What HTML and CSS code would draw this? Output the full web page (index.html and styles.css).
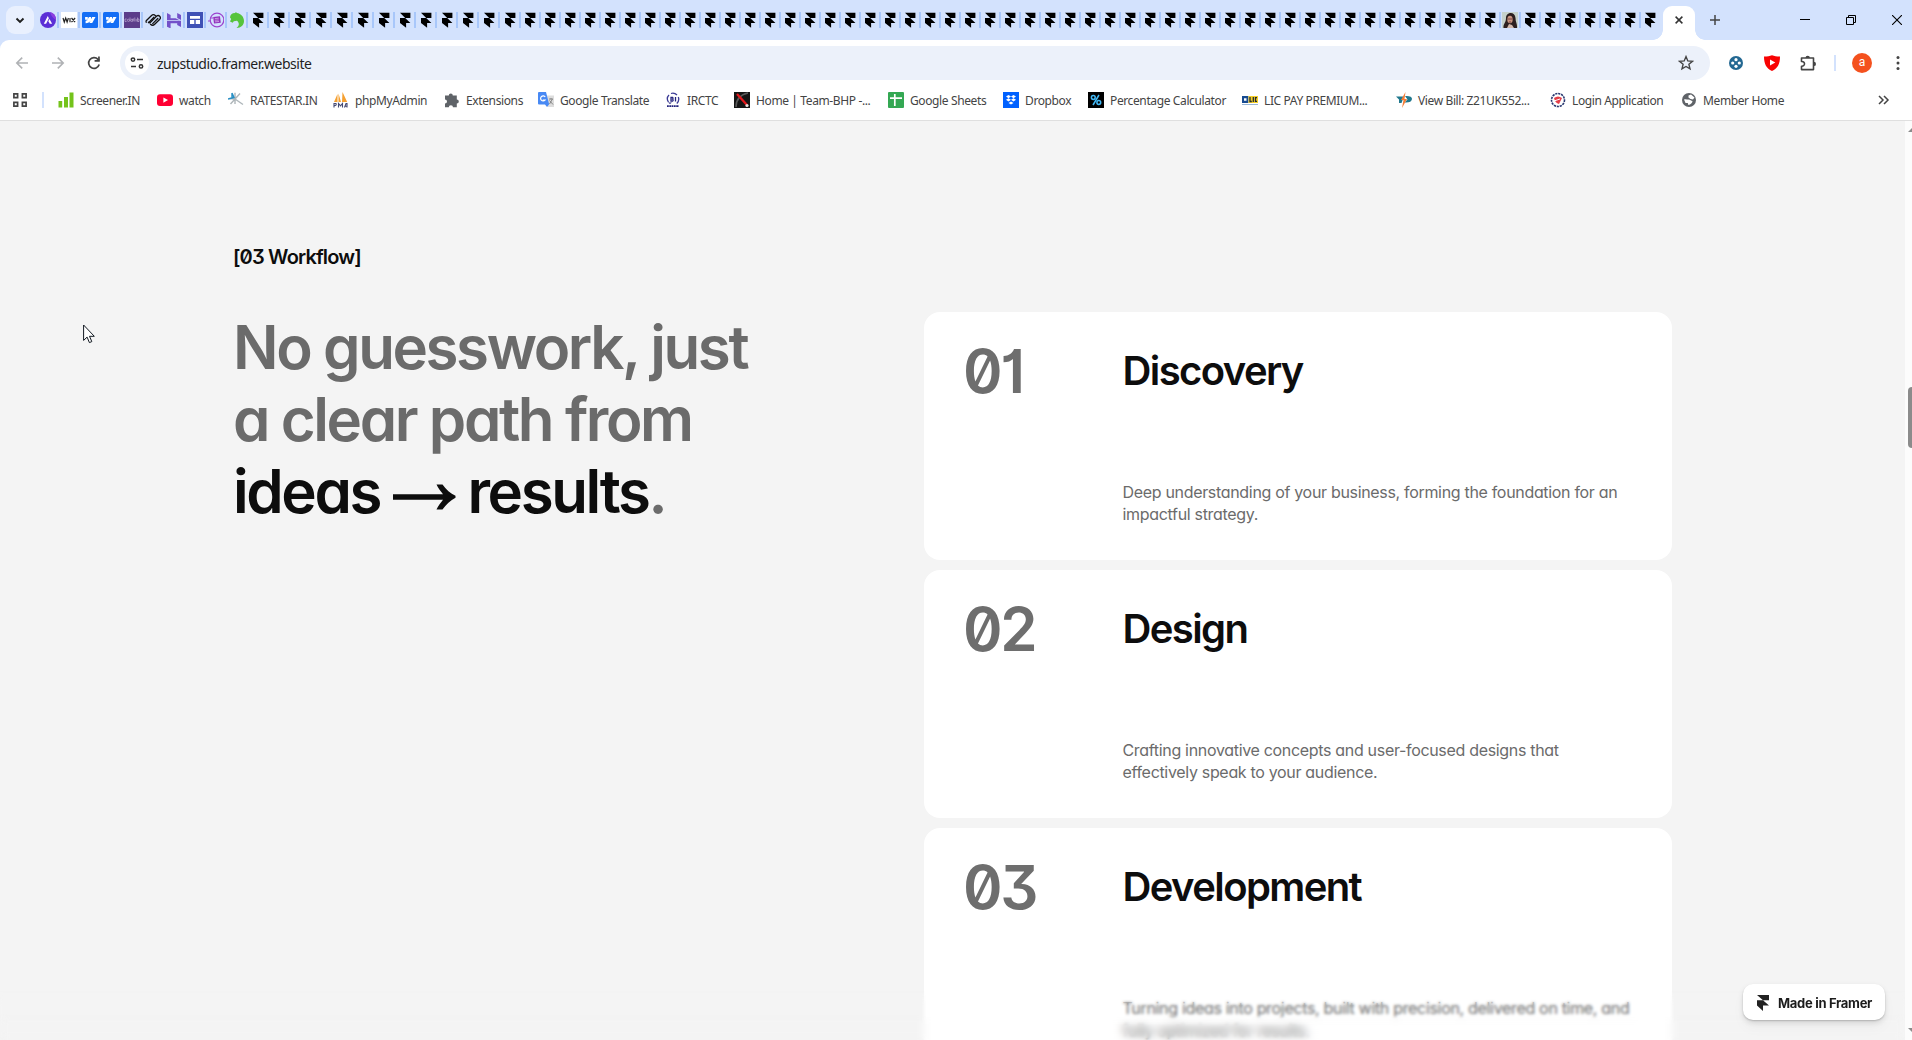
FILE: index.html
```html
<!DOCTYPE html>
<html lang="en">
<head>
<meta charset="utf-8">
<title>zupstudio.framer.website</title>
<link rel="stylesheet" href="styles.css">
</head>
<body>
<svg class="defs" aria-hidden="true">
  <symbol id="framer" viewBox="0 0 16 16"><path d="M3 .8h10.400v5.100H8.200zM3 5.900h5.200l5.200 5H9.100v4.900L3 10.900z"/></symbol>
  <symbol id="astra" viewBox="0 0 16 16"><circle cx="8" cy="8" r="8" fill="#5b2fd6"/><path d="M10 0a8 8 0 0 1 6 8c-3-2-5-4-6-8z" fill="#8b3fe0"/><path d="M3.800 11.800 7.800 4l1.100 2.200-2.800 5.600zM8.300 9.300l1.200-2.400 2.600 4.900H9.700L9.300 10.800z" fill="#fff"/></symbol>
  <symbol id="wix" viewBox="0 0 16 16"><path fill="#fff" d="M0 0h16v16H0z"/><path d="M2 6l1.300 4 1.400-4 1.400 4 1.300-4M9 6v4.200M10.500 6l3.600 4.200M14.100 6l-3.600 4.200" fill="none" stroke="#222" stroke-width="1.200"/></symbol>
  <symbol id="webflow" viewBox="0 0 16 16"><rect width="16" height="16" rx="1.500" fill="#146ef5"/><path d="M13.500 5 10.200 11H7.400l1.200-2.300C7.600 10 6 11 3.600 11.200V8.800s1.500-.1 2.300-1H3.100V5h2.700v2.200L6.900 5H9v2.200L10.200 5z" fill="#fff"/></symbol>
  <symbol id="colorlib" viewBox="0 0 16 16"><path fill="#5b3d8a" d="M0 0h16v16H0z"/><g fill="none" stroke="#bdacd4" stroke-width=".7"><path d="M2.600 7H1v2.500h1.600M9 7v2.500M10 7H8.500M13.500 5.500v4h1.500V7h-1.500"/><circle cx="4.400" cy="8.300" r="1.100"/><circle cx="7.800" cy="8.300" r="1.100"/><path d="M6 5.500v4M10.800 5.500v4M12.200 7v2.500"/></g></symbol>
  <symbol id="squarespace" viewBox="0 0 16 16"><g fill="none" stroke="#111" stroke-width="1.300" stroke-linecap="round"><path d="M1.200 8.800 6.300 3.700a3 3 0 0 1 4.200 0M3.600 10.600l5.300-5.300M1.200 8.800a2 2 0 0 0 0 1.500"/><path d="M5.500 12.300a3 3 0 0 0 4.200 0l5.100-5.100a2.200 2.200 0 0 0-3.100-3.100L5.500 10.300a1.500 1.500 0 0 1-2.100 0M12.800 6.500l-5.100 5.100"/></g></symbol>
  <symbol id="hostinger" viewBox="0 0 16 16"><path d="M1 7.300V1l3.600 2v3.200h5l4 2.100H1zM11.200 6V1L15 3v5zM1 14.800V9l9.700.1L15 11.200H4.600v5.200zM15 8.800v6.200l-3.800-2V9z" fill="#7351c9"/></symbol>
  <symbol id="tdesk" viewBox="0 0 16 16"><path fill="#3f51b5" d="M0 0h16v16H0z"/><path d="M3 4h10v2.700H3zM3 8h4.300v4H3zM8.700 8H13v4H8.700z" fill="#fff"/></symbol>
  <symbol id="ring" viewBox="0 0 16 16"><g fill="none" stroke="#9c45cf" stroke-width="1.200"><circle cx="9" cy="8" r="6.800"/><path d="M0 9h3M2 6h3" stroke-width="1"/></g><path d="M5.200 5 12 4.300l.8 6.500-6.800.8z" fill="#9133bd"/><path d="M6.800 6.600l4-.4M6.800 8.200l4-.2M7 9.800l4-.3" stroke="#eadcf8" stroke-width=".6"/></symbol>
  <symbol id="horse" viewBox="0 0 16 16"><path d="M1 5.500C1 3 3 1 6 1l1-1 .8 1C12 1.500 15 5 15 9c0 4-3 7-7.500 7 3-2.500 3-5 .5-7.300L4.800 9.300 3.700 10.700 1 9.400 2.200 7z" fill="#56c43c"/></symbol>
  <symbol id="photo" viewBox="0 0 16 16"><path fill="#c6d2cb" d="M0 0h16v16H0z"/><path d="M1.500 16C1 12 4 11 4 6c0-6 9-7 9.500 0 0 4 2 6 1.500 10z" fill="#2d2020"/><ellipse cx="8" cy="7.500" rx="2.700" ry="3.800" fill="#c99580"/><path d="M5.500 7h5M7 10h2" stroke="#632d30" stroke-width=".8"/><path d="M5 16l2-4 3 1 2 3z" fill="#d3b9ac"/></symbol>
</svg>

<div class="tabstrip">
  <button class="tab-search" aria-label="Search tabs"><svg width="28" height="28" viewBox="0 0 28 28"><path d="m10.500 12.500 3.500 3.500 3.500-3.500" fill="none" stroke="#1f1f1f" stroke-width="1.900"/></svg></button>
  <div class="tabs" id="tabs"></div>
  <div class="tab-active"><svg width="8" height="8" viewBox="0 0 8 8"><path d="m.6.6 6.800 6.800M7.400.6.600 7.400" stroke="#333" stroke-width="1.500"/></svg></div>
  <svg class="tab-new" width="10" height="10" viewBox="0 0 10 10"><path d="M5 0v10M0 5h10" stroke="#444" stroke-width="1.500"/></svg>
  <div class="window-controls">
    <svg width="10" height="10"><path d="M0 4.500h10" stroke="#000"/></svg>
    <svg width="10" height="10" fill="none" stroke="#000"><path d="M.5 2.500h7v7h-7zM2.500 2.500v-2h7v7h-2"/></svg>
    <svg width="10" height="10"><path d="m0 0 10 10M10 0 0 10" stroke="#000" stroke-width="1.100"/></svg>
  </div>
</div>

<div class="toolbar">
  <div class="nav">
    <svg width="16" height="16" viewBox="0 0 16 16" fill="none" stroke="#b0b2b5" stroke-width="1.600"><path d="M14 8H3M8.200 2.600 2.800 8l5.400 5.400"/></svg>
    <svg width="16" height="16" viewBox="0 0 16 16" fill="none" stroke="#b0b2b5" stroke-width="1.600"><path d="M2 8h11M7.800 2.600 13.200 8l-5.400 5.400"/></svg>
    <svg width="16" height="16" viewBox="0 0 16 16"><path d="M13.200 9.600A5.400 5.400 0 1 1 12 4.300l1.200 1.300" fill="none" stroke="#444" stroke-width="1.700"/><path d="M12.100 1.500h1.700v5.200H8.600V5h3.500z" fill="#444"/></svg>
  </div>
  <div class="omnibox">
    <span class="site-info"><svg width="14" height="14" viewBox="0 0 14 14" fill="none" stroke="#333" stroke-width="1.500"><circle cx="3" cy="3.600" r="1.700"/><path d="M7 3.600h6M1 10.400h5"/><circle cx="11" cy="10.400" r="1.700"/></svg></span>
    <span class="url">zupstudio.framer.website</span>
    <svg class="star" width="16" height="16" viewBox="0 0 16 16"><path d="m8 1.600 1.800 4.300 4.700.4-3.600 3 1.100 4.600L8 11.500l-4 2.400 1.100-4.600-3.600-3 4.700-.4z" fill="none" stroke="#444" stroke-width="1.400"/></svg>
  </div>
  <div class="actions">
    <svg width="14" height="14" viewBox="0 0 14 14"><circle cx="7" cy="7" r="7" fill="#236892"/><g fill="#fff"><circle cx="7" cy="3.700" r="1.600"/><circle cx="7" cy="10.300" r="1.600"/><circle cx="3.700" cy="7" r="1.600"/><circle cx="10.300" cy="7" r="1.600"/></g></svg>
    <svg width="16" height="16" viewBox="0 0 16 16"><path d="M0 1.500C3 1.600 5.500 1 8 .2c2.500.8 5 1.400 8 1.300C16 9 13.500 13.500 8 16 2.500 13.500 0 9 0 1.500z" fill="#f80303"/><path d="M6 4.500 11.300 7.500 6 10.500z" fill="#fff"/></svg>
    <svg width="17" height="17" viewBox="0 0 17 17"><path d="M1.500 3h12v11.600h-12v-3.400C5.500 11.500 5.500 6 1.500 6.500z" fill="none" stroke="#444" stroke-width="1.600" stroke-linejoin="round"/><path d="M5.500 3a2.200 2.200 0 0 1 4.400 0zM13.800 6.700a2.200 2.200 0 0 1 0 4.400z" fill="#444"/></svg>
    <i class="divider"></i>
    <span class="avatar">a</span>
    <svg width="4" height="16" viewBox="0 0 4 16" fill="#444"><circle cx="2" cy="2.500" r="1.500"/><circle cx="2" cy="8" r="1.500"/><circle cx="2" cy="13.500" r="1.500"/></svg>
  </div>
</div>

<div class="bookmarks">
  <svg class="apps" width="14" height="14" viewBox="0 0 14 14" fill="none" stroke="#444" stroke-width="1.700"><path d="M.9.900h3.700v3.700H.9zM9.400.900h3.700v3.700H9.400zM.9 9.400h3.700v3.700H.9zM9.400 9.400h3.700v3.700H9.400z"/></svg>
  <i class="divider"></i>
  <div class="links">
    <a><svg viewBox="0 0 16 16"><path d="M.5 9h3.700v6.500H.5zM6 5h4v10.500H6zM11.500.500h4v15h-4z" fill="#74c31b"/></svg><span>Screener.IN</span></a>
    <a><svg viewBox="0 0 16 16"><rect y="2.200" width="16" height="11.800" rx="3" fill="#f03"/><path d="m6.400 5.500 4.600 2.600-4.600 2.600z" fill="#fff"/></svg><span>watch</span></a>
    <a><svg viewBox="0 0 16 16"><path d="M7 .8V12M2.500 12 12 1.500M7 7l8 5.500M1.500 6.500l5 .5" fill="none" stroke="#aeb6ba" stroke-width="1.400"/><path d="M4 1l2 4.500L0 7M4 1v5" stroke="#258ec4" fill="none" stroke-width="1.400"/></svg><span>RATESTAR.IN</span></a>
    <a><svg viewBox="0 0 16 16"><path d="M4.500 2v8H1zM5.500 1.500 8 10H5.500zM9.500 0l4.700 10H9z" fill="#f5a030"/><path d="M1 15.500v-4h2q1 2-2 2.200M5.500 15.500v-4l2 2.400 2-2.400v4M11.500 15.500l1.500-4h1v4M12 14.200h2" fill="none" stroke="#454a73" stroke-width="1.100"/></svg><span>phpMyAdmin</span></a>
    <a><svg viewBox="0 0 16 16"><path d="M1 3.500h3.800a2 2 0 1 1 4 0h4v4a2 2 0 1 1 0 4v3.800H9a2.100 2.100 0 0 0-4.200 0H1v-3.900a2 2 0 0 0 0-4z" fill="#5f6368"/></svg><span>Extensions</span></a>
    <a><svg viewBox="0 0 16 16"><path d="M7 3.500h9V15H9.500z" fill="#ddd"/><path d="M1 0h7l3.200 12.500H1a1 1 0 0 1-1-1V1a1 1 0 0 1 1-1zM7 12.500h4L9 15z" fill="#4889f4"/><path d="M8 5a2.500 2.500 0 1 0-.2 3H5.500" transform="translate(-.8 0)" fill="none" stroke="#fff" stroke-width="1.200"/><path d="M11 7h4M13 6v1.500M14.500 7l-3 5M11.500 8.500l3.500 4" stroke="#888" fill="none"/></svg><span>Google Translate</span></a>
    <a><svg viewBox="0 0 16 16"><path d="M3.500 10A5.500 5.500 0 0 1 4 3M6 1.500a6 6 0 0 1 6 1.500M13.300 5a6 6 0 0 1-1.500 6.500" fill="none" stroke="#3b3b96" stroke-width="1.300"/><path d="M6 5.300h1.500q1 1 0 1.800 1.300 1.200 0 2H6zM10.500 5v4.500" fill="none" stroke="#24247e" stroke-width="1.300"/><path d="M2 14.200h12" stroke="#24247e" stroke-width="1.800" stroke-dasharray="1.800 .5"/><path d="M3 10.500h4L5 12z" fill="#24247e"/></svg><span>IRCTC</span></a>
    <a><svg viewBox="0 0 16 16"><path d="M0 0h16v16H0z" fill="#151515"/><path d="M2 15C2 8 5 3 14 1" fill="none" stroke="#5a5a5a" stroke-width="1.500"/><path d="m3 2 10 11" stroke="#e5191d" stroke-width="2.300"/><circle cx="13" cy="13.500" r="1.600" fill="#e8e0dd"/></svg><span>Home | Team-BHP -...</span></a>
    <a><svg viewBox="0 0 16 16"><rect width="16" height="16" rx="1" fill="#34a853"/><path d="M6.800 2v12M2 6.200h12" stroke="#fff" stroke-width="1.700"/></svg><span>Google Sheets</span></a>
    <a><svg viewBox="0 0 16 16"><path fill="#0061ff" d="M0 0h16v16H0z"/><path d="m5.500 3 2.500 1.600-2.500 1.600L3 4.600zM10.500 3 13 4.600l-2.500 1.600L8 4.600zM5.500 6.200 8 7.800 5.500 9.400 3 7.800zM10.500 6.200 13 7.800l-2.500 1.600L8 7.800zM8 9.400l2.500 1.600L8 12.600 5.500 11z" fill="#fff"/></svg><span>Dropbox</span></a>
    <a><svg viewBox="0 0 16 16"><path d="M0 0h16v16H0z"/><g fill="none" stroke="#42b8f5" stroke-width="1.500"><circle cx="5.300" cy="5.500" r="1.900"/><circle cx="10.800" cy="10.500" r="1.900"/><path d="M11 3 5 13"/></g></svg><span>Percentage Calculator</span></a>
    <a><svg viewBox="0 0 16 16"><path d="M0 4h6.500v7H0z" fill="#174b91"/><path d="M6.500 4H16v7H6.500z" fill="#f5cf28"/><path d="M8 5v4.500h1.800M11.300 5v5M15 5.700h-1.500v3.600H15" fill="none" stroke="#212b36" stroke-width="1.300"/><path d="M2 7.500h2.500" stroke="#fff" stroke-width="2.500"/><path d="M0 12.500h16" stroke="#98b6d5"/></svg><span>LIC PAY PREMIUM...</span></a>
    <a><svg viewBox="0 0 16 16"><path d="M0 4.500h8L5.500 11H3V7.500zM9 4q7-.5 7 3-.5 4-7.500 3.500l3-3z" fill="#20788d"/><path d="M9.500 0 5 8h2.500L6 16l5-9H8.500z" fill="#f57c35"/></svg><span>View Bill: Z21UK552...</span></a>
    <a><svg viewBox="0 0 16 16"><circle cx="8" cy="8" r="6.500" fill="#fff" stroke="#27366f" stroke-width="1.600" stroke-dasharray="2.200 .8"/><path d="M4 6q4-3 8 0l-3 6q-4-1-5-6z" fill="#e33e48"/><path d="m4 9 6-2" stroke="#fff"/></svg><span>Login Application</span></a>
    <a><svg viewBox="0 0 16 16"><circle cx="8" cy="8" r="7" fill="#5f6368"/><path d="M3 7.500c1.500-.7 3 0 4.500 0 1.800 0 2.500 1.300 4 1.500-.2 2-1.700 3.500-4.200 4L6.800 11H4.500zM7.500 3.500 10 2.500l3.500 3-1.500 2-2.500-.5-2-1.500z" fill="#fff"/></svg><span>Member Home</span></a>
  </div>
  <svg class="more" width="12" height="10" viewBox="0 0 12 10"><path d="m1 1 4 4-4 4M6 1l4 4-4 4" fill="none" stroke="#444" stroke-width="1.500"/></svg>
</div>

<div class="viewport">
  <main class="workflow">
    <p class="label">[03 Workflow]</p>
    <div class="columns">
      <h2>No guesswork, just<br>a clear path from<br><strong>ideas <svg class="arrow" width="63" height="26" viewBox="0 0 63 26" role="img" aria-label="to"><path d="M0 10.200h50C47.500 7 45 4 43.500.500h6C53 5.500 57.500 9.500 62.500 11.800v2C57.500 16.500 53 20.500 49.500 25.500h-6C45 22 47.500 19 50 15.800H0z" fill="#0d0d0d"/></svg> results</strong>.</h2>
      <div class="cards">
        <article><div class="num">01</div><div class="body"><h3>Discovery</h3><p>Deep understanding of your business, forming the foundation for an<br>impactful strategy.</p></div></article>
        <article><div class="num">02</div><div class="body"><h3>Design</h3><p>Crafting innovative concepts and user-focused designs that<br>effectively speak to your audience.</p></div></article>
        <article><div class="num">03</div><div class="body"><h3>Development</h3><p>Turning ideas into projects, built with precision, delivered on time, and<br>fully optimized for results.</p></div></article>
      </div>
    </div>
  </main>
  <div class="scrollbar"><i class="up"></i><i class="thumb"></i><i class="down"></i></div>
  <div class="fade fade-soft"></div>
  <div class="fade fade-strong"></div>
  <a class="made-in"><svg width="12" height="16" viewBox="0 0 12 16"><path d="M0 0h12v5.300H6zM0 5.300h6l6 5.300H6V16l-6-5.400z" fill="#222"/></svg>Made in Framer</a>
  <svg class="cursor" width="13" height="20" viewBox="0 0 13 20"><path d="M.6 1v15.400l3.500-3.300 2.300 5.500 2.400-1-2.300-5.300h4.800z" fill="#fff" stroke="#111820" stroke-width="1"/></svg>
</div>
<script src="tabs.js"></script>
</body>
</html>
```
FILE: tabs.js
```js
// Favicons of the leading tabs; every later tab uses the Framer mark.
const leading = ['astra', 'wix', 'webflow', 'webflow', 'colorlib', 'squarespace', 'hostinger', 'tdesk', 'ring', 'horse'];
const total = 80;
const photoTab = 72;
let markup = '';
for (let i = 0; i < total; i++) {
  const icon = i === photoTab ? 'photo' : leading[i] || 'framer';
  const size = i < 22 ? 'tab tab-wide' : 'tab';
  markup += `<div class="${size}"><svg width="16" height="16"><use href="#${icon}"/></svg></div>`;
}
document.getElementById('tabs').innerHTML = markup;
```
FILE: styles.css
```css
* { box-sizing: border-box; }
body { margin: 0; height: 1040px; overflow: hidden; display: flex; flex-direction: column; background: #fff; font-family: "Noto Sans", "Open Sans", sans-serif; }
svg { display: block; flex: none; }
h2, h3, p { margin: 0; }
.defs { width: 0; height: 0; position: absolute; }

.tabstrip { height: 40px; flex: none; background: #d3e2fd; display: flex; align-items: center; padding-left: 6px; }
.tab-search { width: 28px; height: 28px; border: 0; padding: 0; border-radius: 9px; background: #e9f0fe; }
.tabs { display: flex; margin-left: 6px; width: 1623px; }
.tab { width: 20px; height: 16px; flex: none; display: flex; }
.tab::after { content: ""; width: 2px; height: 16px; margin-left: 1px; background: #a8c7fa; }
.tab:last-child::after { display: none; }
.tab-wide { width: 21px; }
.tab-active { width: 32px; height: 34px; margin-top: 6px; background: #fff; border-radius: 9px 9px 0 0; display: flex; align-items: center; justify-content: center; padding-bottom: 6px; position: relative; }
.tab-active::before, .tab-active::after { content: ""; position: absolute; bottom: 0; width: 10px; height: 10px; }
.tab-active::before { left: -10px; background: radial-gradient(circle at 0 0, transparent 9.500px, #fff 10px); }
.tab-active::after { right: -10px; background: radial-gradient(circle at 100% 0, transparent 9.500px, #fff 10px); }
.tab-new { margin-left: 15px; }
.window-controls { margin-left: auto; display: flex; gap: 36px; padding-right: 10px; }

.toolbar { height: 46px; flex: none; display: flex; align-items: center; background: linear-gradient(#d3e2fd, #d3e2fd) 0 0 / 12px 12px no-repeat; position: relative; isolation: isolate; }
.toolbar::before { content: ""; position: absolute; inset: 0; z-index: -1; background: #fff; border-top-left-radius: 9px; }
.nav { display: flex; gap: 20px; width: 120px; padding-left: 14px; }
.omnibox { width: 1590px; height: 34px; border-radius: 17px; background: #ecf1fa; display: flex; align-items: center; padding: 0 16px 0 5px; }
.site-info { width: 24px; height: 24px; border-radius: 50%; background: #fff; display: grid; place-items: center; }
.url { margin-left: 8px; padding-top: 1px; font-size: 14px; letter-spacing: -.48px; color: #1f1f1f; line-height: 20px; }
.star { margin-left: auto; }
.actions { display: flex; align-items: center; padding-left: 19px; }
.actions svg:nth-child(2) { margin-left: 21px; }
.actions svg:nth-child(3) { margin-left: 20px; }
.divider { width: 2px; height: 16px; background: #d3e2fd; }
.actions .divider { margin-left: 17px; }
.avatar { width: 20px; height: 20px; margin: 0 24px 0 16px; border-radius: 50%; background: #f4511e; color: #fff; font: 12px/18px Roboto, sans-serif; text-align: center; }

.bookmarks { height: 35px; flex: none; border-bottom: 1px solid #dfdfdf; display: flex; align-items: center; padding: 0 22px 6px 13px; }
.bookmarks .divider { margin-left: 15px; }
.links { margin-left: 14px; width: 1780px; display: grid; grid-template-columns: 99px 71px 105px 111px 94px 127px 69px 154px 115px 85px 154px 154px 154px 131px 105px; }
.links a { display: flex; align-items: center; gap: 6px; }
.links svg { width: 16px; height: 16px; }
.links span { padding-top: 1px; font-size: 12px; letter-spacing: -.38px; color: #444; line-height: 18px; white-space: nowrap; }
.more { margin-left: auto; }

.viewport { height: 919px; flex: none; background: #f4f4f4; position: relative; display: flex; overflow: hidden; }
.workflow { width: 1905px; padding: 121px 233px 0; font-family: Inter, sans-serif; font-feature-settings: "cv01", "cv09", "cv11", "zero"; color: #0d0d0d; }
.label { font-size: 20px; line-height: 30px; font-weight: 560; letter-spacing: -.84px; }
.columns { display: grid; grid-template-columns: 691px 748px; margin-top: 40px; }
h2 { margin-top: -1px; font-size: 60px; line-height: 72px; font-weight: 600; letter-spacing: -2.400px; color: #6b6b6b; white-space: nowrap; }
h2 strong { font-weight: 600; color: #0d0d0d; }
.arrow { display: inline-block; vertical-align: 3px; margin-right: -1px; }
.cards { display: grid; gap: 10px; }
article { height: 248px; padding: 35px 39px; border-radius: 16px; background: #fff; display: grid; grid-template-columns: 159.500px 1fr; }
.num { font-size: 60px; line-height: 48px; font-weight: 600; letter-spacing: -2.400px; color: #6e6e6e; }
.body { display: flex; flex-direction: column; justify-content: space-between; white-space: nowrap; }
h3 { font-size: 40px; line-height: 48px; font-weight: 600; letter-spacing: -1.600px; }
.body p { font-size: 16px; line-height: 22px; letter-spacing: -.32px; color: #6b6b6b; }

.scrollbar { width: 7px; background: #fcfcfc; position: relative; }
.scrollbar i { position: absolute; right: 0; }
.thumb { top: 266px; width: 4px; height: 61px; background: #8b8b8b; border-radius: 4px 0 0 4px; }
.up { top: 7px; border-left: 4px solid transparent; border-bottom: 4px solid #8b8b8b; }
.down { bottom: 8px; border-left: 4px solid transparent; border-top: 4px solid #8b8b8b; }

.fade { position: absolute; left: 0; width: 1905px; bottom: 0; pointer-events: none; }
.fade-soft { height: 50px; backdrop-filter: blur(1.500px); mask-image: linear-gradient(transparent, #000 16px); }
.fade-strong { height: 26px; backdrop-filter: blur(4px); mask-image: linear-gradient(transparent, #000 12px); }
.made-in { position: absolute; left: 1743px; top: 863px; width: 142px; height: 36px; border-radius: 10px; background: #fff; display: flex; align-items: center; gap: 9px; padding: 1px 0 0 14px; font: 650 13px Inter, sans-serif; letter-spacing: -.3px; color: #1c1c1c; white-space: nowrap; box-shadow: 0 1px 2px #0003, 0 3px 6px #0000001c, 0 8px 14px #00000008; }
.cursor { position: absolute; left: 83px; top: 203px; }
```
